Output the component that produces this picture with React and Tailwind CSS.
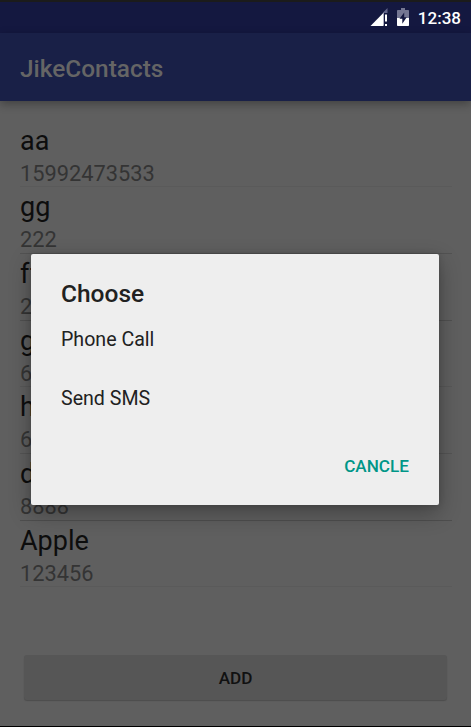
const contacts = [
  { name: 'aa', phone: '15992473533', line: 'border-[#5a5a5a]' },
  { name: 'gg', phone: '222', line: 'border-[#525252]' },
  { name: 'ff', phone: '222', line: 'border-[#505050]' },
  { name: 'gg', phone: '666', line: 'border-[#585858]' },
  { name: 'hh', phone: '666', line: 'border-[#545454]' },
  { name: 'dd', phone: '8888', line: 'border-[#4e4e4e]' },
  { name: 'Apple', phone: '123456', line: 'border-[#5a5a5a]' },
];

function StatusBar() {
  return (
    <div className="flex h-[33px] shrink-0 items-start justify-end border-t-2 border-[#1b1b1b] bg-[#141840] pr-[10px] text-white">
      <svg className="mt-[6px] h-[18px] w-[18px]" viewBox="0 0 18 18">
        <path d="M17.500 0V5H14V17H13V4.500Z" fill="#62658a" />
        <path d="M0.500 18L13.500 4.700V18Z" fill="#fff" />
        <path d="M15 6.500h2v7h-2zM15 16h2v2h-2z" fill="#fff" />
      </svg>
      <svg className="mt-[6px] ml-[9px] h-[18px] w-[12px]" viewBox="0 0 12 18">
        <path d="M4 0h4v2h3.200q.8 0 .8.8V10H0V2.800q0-.8.8-.8H4Z" fill="#747692" />
        <path d="M0 10h12v7.200q0 .8-.8.8H.8q-.8 0-.8-.8Z" fill="#fff" />
        <path d="M7.200 4.500L2.500 10.800H5.300V15.700L9.700 9.200H7.200Z" fill="#141840" />
      </svg>
      <span className="mt-[6px] ml-[9px] text-[17px] leading-[20px] font-medium">12:38</span>
    </div>
  );
}

function Contact({ name, phone, line }) {
  return (
    <li className={`h-[66.7px] border-b pt-[4px] ${line}`}>
      <div className="text-[27px] leading-[32px] text-[#0d0d0d]">{name}</div>
      <div className="mt-[4px] text-[21.8px] leading-[26px] text-[#343434]">{phone}</div>
    </li>
  );
}

function ChooseDialog() {
  return (
    <div
      role="dialog"
      className="absolute top-[254px] left-[31px] flex h-[251px] w-[408px] flex-col rounded-[2px] bg-[#eee] px-[30px] pt-[25px] text-[#212121] shadow-[0_8px_22px_rgba(0,0,0,0.3),0_0_6px_rgba(0,0,0,0.15)]"
    >
      <h2 className="text-[24.5px] leading-[30px] font-medium">Choose</h2>
      <button className="mt-[1px] h-[59px] text-left text-[19.6px]">Phone Call</button>
      <button className="h-[59px] text-left text-[19.6px]">Send SMS</button>
      <button className="mt-[28px] self-end text-[17.15px] leading-[20px] font-medium text-[#009688]">
        CANCLE
      </button>
    </div>
  );
}

export default function App() {
  return (
    <div className="relative flex h-[727px] w-[471px] flex-col overflow-hidden border-b border-black bg-[#5f5f5f] font-[Roboto,sans-serif]">
      <StatusBar />
      <header className="flex h-[68px] shrink-0 items-center bg-[#192047] px-[20px] pt-[4px] text-[24.4px] font-medium text-[#656565] shadow-[0_3px_9px_rgba(0,0,0,0.32)]">
        JikeContacts
      </header>
      <ul className="mx-[20px] mt-[19.6px] w-[431.5px]">
        {contacts.map((contact, i) => (
          <Contact key={i} {...contact} />
        ))}
      </ul>
      <button className="mx-[24px] mt-auto mb-[26px] h-[45px] rounded-[3px] bg-[#565656] pt-[2px] text-[17.15px] font-medium text-[#111] shadow-[0_1px_1px_#4d4d4d]">
        ADD
      </button>
      <ChooseDialog />
    </div>
  );
}
